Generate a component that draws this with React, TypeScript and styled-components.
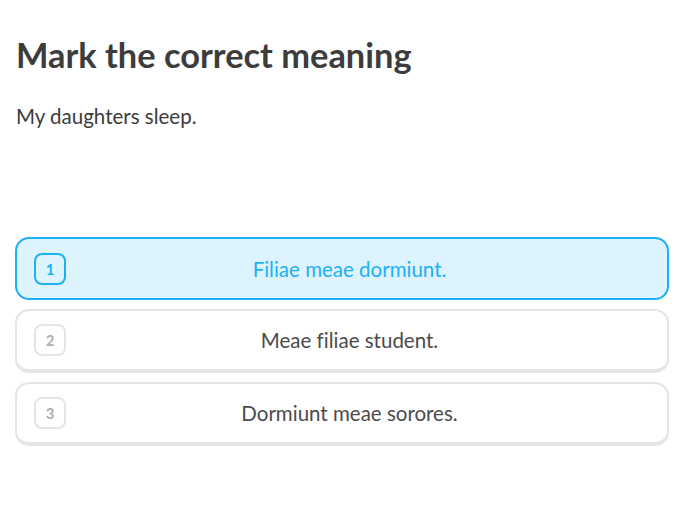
import React from "react";
import styled, { createGlobalStyle } from "styled-components";

const Global = createGlobalStyle`
  html, body { margin: 0; padding: 0; background: #fff; }
  body {
    font-family: "Lato", "Noto Sans", sans-serif;
    color: #4b4b4b;
    font-variant-ligatures: none;
  }
`;

const Page = styled.div`
  display: flex;
  flex-direction: column;
  padding: 35px 31px 0 15px;
`;

const Title = styled.h1`
  margin: 0 0 0 1px;
  font-size: 34.4px;
  line-height: 40px;
  font-weight: 700;
  color: #3c3c3c;
`;

const Prompt = styled.p`
  margin: 29px 0 0 1px;
  font-size: 20.5px;
  line-height: 24px;
  color: #3c3c3c;
`;

const Choices = styled.div`
  display: flex;
  flex-direction: column;
  gap: 9px;
  margin-top: 109px;
`;

const Choice = styled.div<{ $selected?: boolean }>`
  box-sizing: border-box;
  height: ${(p) => (p.$selected ? 63 : 64)}px;
  display: flex;
  align-items: center;
  padding: 0 17px;
  border: 2px solid ${(p) => (p.$selected ? "#1cb0f6" : "#e5e5e5")};
  border-bottom-width: ${(p) => (p.$selected ? 2 : 4)}px;
  border-radius: 14px;
  background: ${(p) => (p.$selected ? "#ddf4ff" : "#fff")};
`;

const Num = styled.span<{ $selected?: boolean }>`
  box-sizing: border-box;
  width: 32px;
  height: 32px;
  flex: none;
  display: flex;
  align-items: center;
  justify-content: center;
  border: 2px solid ${(p) => (p.$selected ? "#1cb0f6" : "#e5e5e5")};
  border-radius: 8px;
  font-size: 15px;
  font-weight: 700;
  color: ${(p) => (p.$selected ? "#1cb0f6" : "#afafaf")};
`;

const Label = styled.span<{ $selected?: boolean }>`
  flex: 1;
  text-align: center;
  padding-right: 17px;
  font-size: 20.5px;
  color: ${(p) => (p.$selected ? "#1cb0f6" : "#4b4b4b")};
`;

const options = ["Filiae meae dormiunt.", "Meae filiae student.", "Dormiunt meae sorores."];

export default function App() {
  return (
    <>
      <Global />
      <Page>
        <Title>Mark the correct meaning</Title>
        <Prompt>My daughters sleep.</Prompt>
        <Choices>
          {options.map((o, i) => (
            <Choice key={o} $selected={i === 0}>
              <Num $selected={i === 0}>{i + 1}</Num>
              <Label $selected={i === 0}>{o}</Label>
            </Choice>
          ))}
        </Choices>
      </Page>
    </>
  );
}
